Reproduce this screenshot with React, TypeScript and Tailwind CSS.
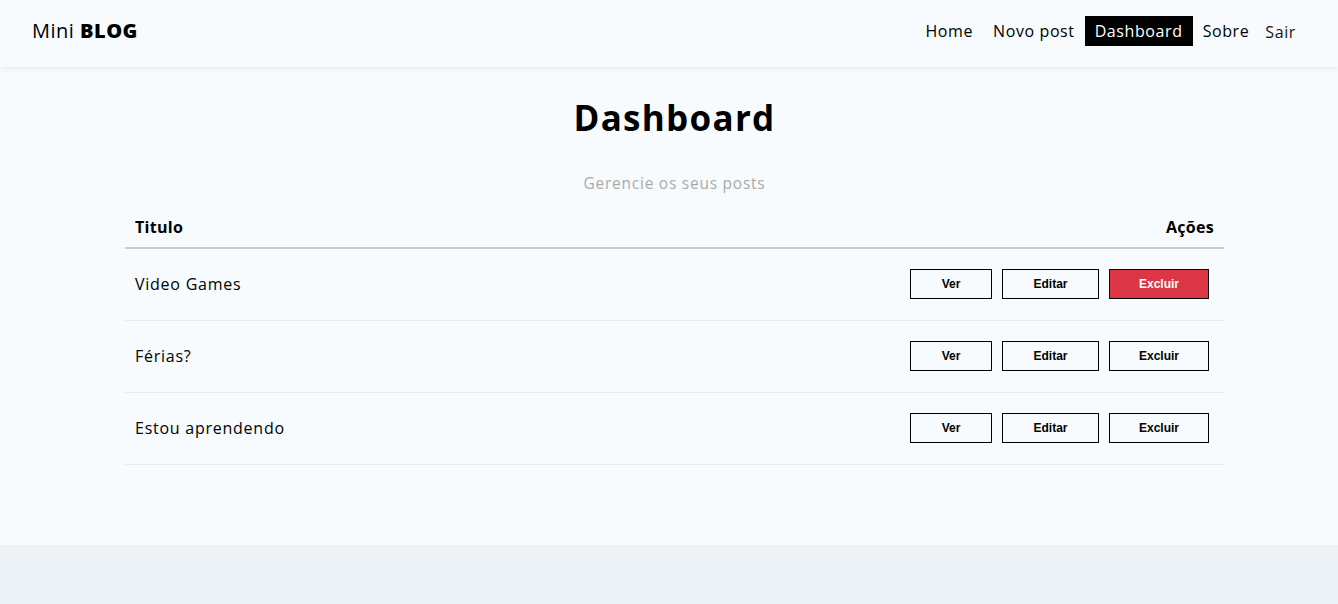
const posts = [
  { id: 1, title: "Video Games" },
  { id: 2, title: "Férias?" },
  { id: 3, title: "Estou aprendendo" },
];

const font = { fontFamily: '"Open Sans", "Noto Sans", sans-serif' };

export default function App() {
  return (
    <div className="min-h-[604px] flex flex-col bg-[#f7fbfe] text-black" style={font}>
      {/* navbar */}
      <nav className="h-[67px] flex items-center justify-between px-[32px] pb-[5px] shadow-[0_2px_6px_rgba(0,0,0,0.06)] bg-[#f7fbfe]">
        <a className="text-[20px] tracking-[0.5px]">
          Mini <span className="font-extrabold">BLOG</span>
        </a>
        <ul className="flex items-center text-[16px] tracking-[0.6px]">
          <li><a className="block px-[10px] py-[4px]">Home</a></li>
          <li><a className="block px-[10px] py-[4px]">Novo post</a></li>
          <li><a className="block px-[10px] h-[30px] leading-[30px] bg-black text-white">Dashboard</a></li>
          <li><a className="block px-[10px] py-[4px]">Sobre</a></li>
          <li>
            <button className="block pl-[6px] pr-[10px] pt-[2px] text-[16px] tracking-[0.6px] text-[#1c1020]">Sair</button>
          </li>
        </ul>
      </nav>

      {/* conteúdo */}
      <main className="flex-1 pt-[28px] pb-[80px]">
        <div className="ml-[125px] w-[1099px] flex flex-col items-center">
          <h1 className="text-[35px] font-bold tracking-[1.3px] leading-[46px]">Dashboard</h1>
          <p className="mt-[31px] text-[#aaa] text-[15.5px] tracking-[0.75px]">Gerencie os seus posts</p>

          <div className="w-full mt-[13px]">
            <div className="flex justify-between items-start pt-[7px] px-[10px] h-[41px] border-b-2 border-[#ccc] font-bold text-[16px] tracking-[0.3px]">
              <span>Titulo</span>
              <span>Ações</span>
            </div>
            {posts.map((post, i) => (
              <div
                key={post.id}
                className="flex justify-between items-center h-[72px] pb-[2px] pl-[10px] pr-[15px] border-b border-[#e9ecef]"
              >
                <span className="text-[16px] tracking-[0.75px]">{post.title}</span>
                <div className="flex gap-[10px] font-bold text-[12px]" style={{ fontFamily: '"Liberation Sans", Arial, sans-serif' }}>
                  <button className="w-[82px] h-[30px] border border-black">Ver</button>
                  <button className="w-[97px] h-[30px] border border-black">Editar</button>
                  <button
                    className={
                      i === 0
                        ? "w-[100px] h-[30px] border border-black bg-[#dc3545] text-white"
                        : "w-[100px] h-[30px] border border-black"
                    }
                  >
                    Excluir
                  </button>
                </div>
              </div>
            ))}
          </div>
        </div>
      </main>

      <footer className="h-[59px] bg-[#edf2f7]"></footer>
    </div>
  );
}
